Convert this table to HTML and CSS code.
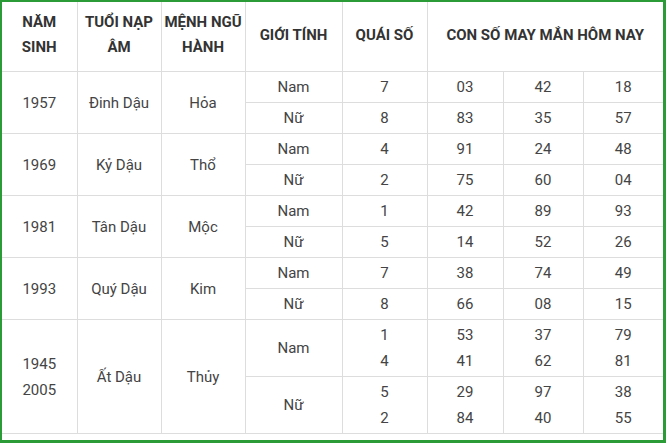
FILE: index.html
```html
<!DOCTYPE html>
<html lang="vi">
<head>
<meta charset="utf-8">
<title>Con số may mắn</title>
<link rel="stylesheet" href="styles.css">
</head>
<body>
<div class="frame">
<table class="lucky">
<colgroup>
<col class="c-year"><col class="c-age"><col class="c-menh"><col class="c-sex"><col class="c-qs"><col class="c-n1"><col class="c-n2"><col class="c-n3">
</colgroup>
<thead>
<tr>
<th>NĂM<br>SINH</th>
<th>TUỔI NẠP<br>ÂM</th>
<th>MỆNH NGŨ<br>HÀNH</th>
<th>GIỚI TÍNH</th>
<th>QUÁI SỐ</th>
<th colspan="3">CON SỐ MAY MẮN HÔM NAY</th>
</tr>
</thead>
<tbody>
<tr><td rowspan="2">1957</td><td rowspan="2">Đinh Dậu</td><td rowspan="2">Hỏa</td><td>Nam</td><td>7</td><td>03</td><td>42</td><td>18</td></tr>
<tr><td>Nữ</td><td>8</td><td>83</td><td>35</td><td>57</td></tr>
<tr><td rowspan="2">1969</td><td rowspan="2">Kỷ Dậu</td><td rowspan="2">Thổ</td><td>Nam</td><td>4</td><td>91</td><td>24</td><td>48</td></tr>
<tr><td>Nữ</td><td>2</td><td>75</td><td>60</td><td>04</td></tr>
<tr><td rowspan="2">1981</td><td rowspan="2">Tân Dậu</td><td rowspan="2">Mộc</td><td>Nam</td><td>1</td><td>42</td><td>89</td><td>93</td></tr>
<tr><td>Nữ</td><td>5</td><td>14</td><td>52</td><td>26</td></tr>
<tr><td rowspan="2">1993</td><td rowspan="2">Quý Dậu</td><td rowspan="2">Kim</td><td>Nam</td><td>7</td><td>38</td><td>74</td><td>49</td></tr>
<tr><td>Nữ</td><td>8</td><td>66</td><td>08</td><td>15</td></tr>
<tr><td rowspan="2">1945<br>2005</td><td rowspan="2">Ất Dậu</td><td rowspan="2">Thủy</td><td>Nam</td><td>1<br>4</td><td>53<br>41</td><td>37<br>62</td><td>79<br>81</td></tr>
<tr><td>Nữ</td><td>5<br>2</td><td>29<br>84</td><td>97<br>40</td><td>38<br>55</td></tr>
</tbody>
</table>
</div>
</body>
</html>
```
FILE: styles.css
```css
html, body {
  margin: 0;
  padding: 0;
  background: #fff;
}

.frame {
  width: 661px;
  border-style: solid;
  border-color: #2b9b37;
  border-width: 2px 3px 3px 2px;
  padding-bottom: 6px;
  background: #fff;
}

.lucky {
  width: 661px;
  table-layout: fixed;
  border-collapse: collapse;
  font-family: Roboto, "Liberation Sans", Arial, sans-serif;
  font-size: 15px;
  color: #444;
}

.c-year { width: 75px; }
.c-age { width: 84px; }
.c-menh { width: 84px; }
.c-sex { width: 97px; }
.c-qs { width: 85px; }
.c-n1 { width: 76px; }
.c-n2 { width: 80px; }
.c-n3 { width: 80px; }

.lucky th,
.lucky td {
  border: 1px solid #dddddd;
  text-align: center;
  vertical-align: middle;
  padding: 2px 0;
  line-height: 26px;
  font-weight: 400;
}

.lucky td {
  height: 26px;
}

.lucky th {
  font-weight: 700;
  color: #333;
  line-height: 25px;
  padding: 8px 0 11px;
  border-top: none;
  white-space: nowrap;
}

.lucky tr > :first-child { border-left: none; }
.lucky tr > :last-child { border-right: none; }
.lucky tbody tr:nth-child(even) > :first-child { border-left: 1px solid #dddddd; }
```
